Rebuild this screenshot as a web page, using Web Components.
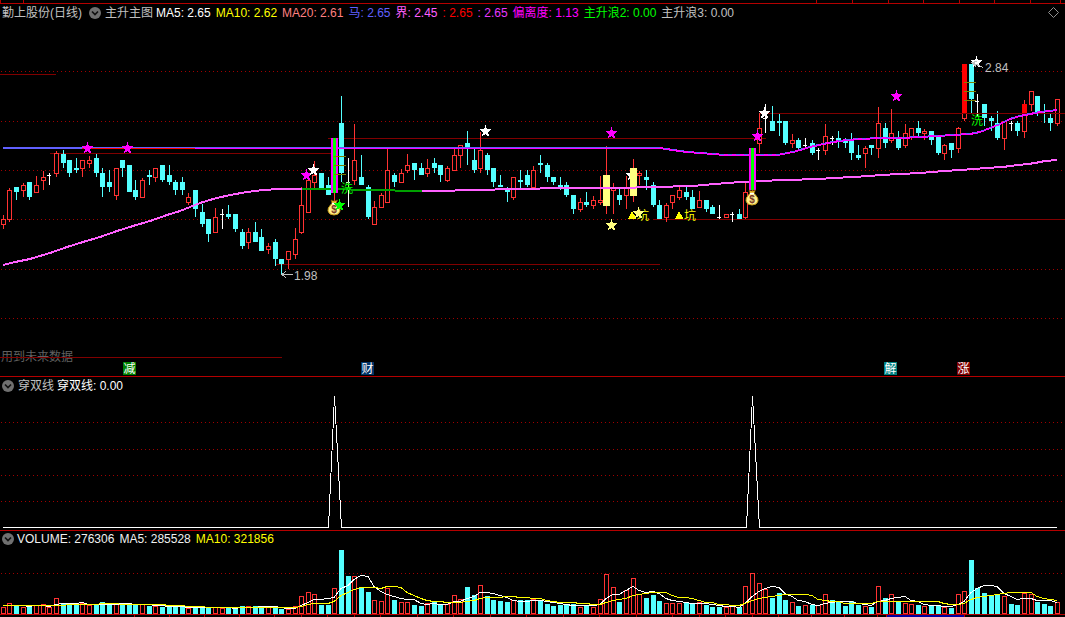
<!DOCTYPE html>
<html lang="zh-CN">
<head>
<meta charset="utf-8">
<title>勤上股份(日线)</title>
<style>
html{background:#000}
body{margin:0;background:#000;color:#c0c0c0;font:12px/16px "Liberation Sans","Noto Sans CJK SC",sans-serif}
</style>
</head>
<body>
<stock-terminal></stock-terminal>

<template id="t-terminal">
<style>
:host{display:flex;flex-direction:column;overflow:hidden}
</style>
<time-ruler edge="top"></time-ruler>
<chart-panel>
  <indicator-bar slot="bar" label="主升主图">
    <span slot="title">勤上股份(日线)</span>
    <indicator-value>MA5: 2.65</indicator-value>
    <indicator-value tone="yellow">MA10: 2.62</indicator-value>
    <indicator-value tone="salmon">MA20: 2.61</indicator-value>
    <indicator-value tone="blue">马: 2.65</indicator-value>
    <indicator-value tone="pink">界: 2.45</indicator-value>
    <indicator-value tone="red">: 2.65</indicator-value>
    <indicator-value tone="violet">: 2.65</indicator-value>
    <indicator-value tone="magenta">偏离度: 1.13</indicator-value>
    <indicator-value tone="green">主升浪2: 0.00</indicator-value>
    <indicator-value tone="grey">主升浪3: 0.00</indicator-value>
    <diamond-button slot="end"></diamond-button>
  </indicator-bar>
  <price-chart></price-chart>
</chart-panel>
<chart-panel ruled>
  <indicator-bar slot="bar" label="穿双线">
    <indicator-value>穿双线: 0.00</indicator-value>
  </indicator-bar>
  <signal-chart></signal-chart>
</chart-panel>
<chart-panel ruled>
  <indicator-bar slot="bar" compact>
    <indicator-value tone="light">VOLUME: 276306</indicator-value>
    <indicator-value tone="light">MA5: 285528</indicator-value>
    <indicator-value tone="yellow">MA10: 321856</indicator-value>
  </indicator-bar>
  <volume-chart></volume-chart>
</chart-panel>
<time-ruler edge="bottom"></time-ruler>
</template>

<template id="t-panel">
<style>
:host{display:block}
:host([ruled]){border-top:1px solid #b40000}
</style>
<slot name="bar"></slot><slot></slot>
</template>

<template id="t-bar">
<style>
:host{display:flex;align-items:center;gap:5px;height:17px;padding:0 6px 0 2px;white-space:nowrap}
:host([compact]){height:16px}
button{all:unset;display:block;width:12px;height:12px;cursor:pointer}
svg{display:block;width:12px;height:12px}
.lead{display:flex;align-items:center;gap:4px;margin-right:-2px}
.lead slot::slotted(span){margin-right:3px}
.end{margin-left:auto}
</style>
<span class="lead"><slot name="title"></slot><button type="button" aria-label="折叠指标"><svg viewBox="0 0 12 12"><circle cx="6" cy="6" r="6" fill="#707070"/><path d="M3 4.5 6 7.5 9 4.5" fill="none" stroke="#111" stroke-width="1.7"/></svg></button><span class="name"></span></span>
<slot></slot>
<span class="end"><slot name="end"></slot></span>
</template>

<script>
const N = 160;
const px = i => Math.floor(3.35 + 6.63 * i);
const CYAN = '#54ffff', RED = '#ff3232', DIM = '#800000';

const mount = (el, html) => {
  const root = el.attachShadow({ mode: 'open' });
  root.innerHTML = html;
  return root;
};
const clone = (el, id) => {
  const root = el.attachShadow({ mode: 'open' });
  root.append(document.getElementById(id).content.cloneNode(true));
  return root;
};
const rect = (x, y, w, h, f) => `<rect x="${x}" y="${y}" width="${w}" height="${h}" fill="${f}"/>`;
const hline = (x1, x2, y, f = DIM) => rect(x1, y, x2 - x1, 1, f);
const hollow = (x, y, w, h, c) => `<rect x="${x + .5}" y="${y + .5}" width="${w - 1}" height="${h - 1}" fill="#000" stroke="${c}"/>`;
const poly = (pts, c, w = 1, dash = '') => `<polyline points="${pts}" fill="none" stroke="${c}" stroke-width="${w}"${dash && ` stroke-dasharray="${dash}"`}/>`;
const dots = ys => ys.map(y => `<path d="M1 ${y + .5}H1065" stroke="#a00000" stroke-dasharray="1 3"/>`).join('');
const chart = (y, h, body) => `<style>:host{display:block}svg{display:block;width:100%;height:auto}text{font:12px "Liberation Sans","Noto Sans CJK SC",sans-serif}</style>
<svg viewBox="0 ${y} 1065 ${h}" shape-rendering="crispEdges" role="img">${body}</svg>`;

/* kind, high, body top, body bottom, low ; w = doji with the bar at body top */
const CANDLES = `r215,219,225,229 r188,190,220,222 c187,187,192,200 r183,185,191,197 c182,182,197,200 r176,185,193,193 r171,177,181,190 w173,175,175,185
r151,153,174,177 c150,154,163,168 c160,160,173,177 c158,168,170,173 r160,160,169,177 r156,160,164,168 c154,158,173,177 c168,173,187,197
c170,182,187,192 r168,168,196,200 c160,160,168,177 c165,165,192,192 c180,190,197,200 r178,180,198,198 c170,175,177,185 r168,168,178,182
c165,165,180,182 c165,175,182,185 c180,182,190,195 c177,182,190,195 r193,197,203,205 c190,190,209,217 c204,212,224,227 c219,219,234,242
r208,217,233,233 w209,214,214,229 c205,214,217,219 c214,214,229,232 c229,232,246,249 r228,232,243,249 c222,232,242,242 c229,237,251,251
r243,246,250,254 c239,242,259,266 c259,259,264,275 r251,251,260,269 r228,239,255,259 r187,205,233,234 r180,180,213,213 r161,175,183,188
c173,173,188,188 c177,185,195,195 g138,138,193,201 c96,123,173,182 w158,182,182,207 r124,160,181,185 c155,177,185,185 c185,187,217,219
r201,207,225,225 r193,195,208,208 r149,170,203,203 c173,175,182,187 r169,173,183,183 r154,165,171,173 c163,163,170,180 c163,168,175,175
r159,168,174,177 c158,163,168,173 c165,165,175,182 r166,168,181,182 r148,155,171,171 r145,145,156,168 c131,143,148,165 c149,160,170,173
r132,150,169,173 c153,155,170,175 c168,168,182,187 c175,185,187,187 c187,190,192,202 r177,177,198,200 c170,180,182,188 c170,175,185,187
r166,170,188,188 c155,163,165,173 c163,165,177,182 c177,177,182,185 c177,185,187,190 c182,185,195,197 c195,195,209,214 r198,202,210,212
c192,202,205,207 r196,200,206,209 r176,200,203,205 y146,175,206,214 r183,188,191,214 c189,195,200,205 r176,188,196,209 y159,168,196,202
r171,173,176,185 c170,177,180,190 c182,185,205,207 c200,205,219,219 r203,205,218,222 r195,195,203,209 r187,190,198,200 c187,192,197,200
c190,197,209,209 r191,200,208,208 c200,200,209,212 c205,207,214,214 w205,217,217,219 r214,214,218,218 w212,214,214,222 c209,214,219,219
r183,192,218,219 g148,148,190,192 r113,128,144,153 w104,118,118,133 c106,121,131,131 c114,121,123,136 c121,121,143,145 r134,140,144,148
c138,140,148,150 w138,145,145,147 c140,143,153,155 w148,150,150,160 r124,136,151,155 w136,138,138,145 c131,138,140,148 c138,140,143,148
c133,140,153,160 c145,155,158,160 r146,148,154,168 c145,145,148,155 r107,123,149,158 c123,128,143,148 r109,133,141,143 c131,137,148,150
r124,133,146,148 r128,128,137,140 c121,128,133,137 r129,131,134,140 c131,131,140,145 c137,137,153,155 r144,145,154,160 c143,143,150,158
r127,128,149,153 r64,64,119,121 c64,64,99,113 w94,101,101,116 c104,104,118,126 c116,118,121,131 c111,123,138,140 r121,121,139,150
w121,123,123,131 c121,123,131,136 r100,104,132,138 r91,91,105,111 c96,96,112,116 c104,113,114,123 c114,118,123,131 r99,99,124,126`
  .split(/\s+/).map(s => [s[0], ...s.slice(1).split(',').map(Number)]);

/* bar kind and the y of its top edge */
const VOLUMES = `r607 r603 c605 r607 c606 r605 r604 r607 r598 c603 c604 c604 r603 r605 c604 c602 c604 r604 c603 c603
c604 r604 c606 r606 c607 c606 c606 c607 r608 c607 c607 c607 r607 r608 c608 c608 c606 r606 c606 c606
r607 c607 c609 r609 r606 r596 r592 r594 c605 c605 r588 c550 c576 r576 c587 c592 r600 r601 r588 c600
r602 r602 c605 c606 r603 c601 c604 r604 r595 r599 c587 c595 r585 c596 c600 c601 c602 r600 c600 c600
r599 c600 c604 c606 c605 c604 c604 r607 c605 r607 r599 r574 r587 c602 r590 r578 r594 c598 c595 c601
r603 r603 r603 c602 c603 r602 c605 c607 c607 r607 r606 c607 r586 r573 r583 r589 c598 c593 c600 r602
c606 r605 c605 r605 r594 c600 c602 c606 c601 c605 r606 c607 r586 c598 r594 c601 r603 r604 c605 r606
c605 c605 r607 c608 r594 r591 c560 c588 c593 c595 c594 r596 c604 c605 r593 r594 c602 c604 c606 r602`
  .split(/\s+/).map(s => [s[0], +s.slice(1)]);

const candle = ([k, hi, a, b, lo], i) => {
  const x = px(i);
  if (k === 'w') return rect(x, hi, 1, lo - hi, '#fff') + rect(x - 2, a, 4, 1, '#fff');
  if (k === 'g') return rect(x, hi, 1, lo - hi, RED) + rect(x - 3, a, 7, b - a, '#ff00ff') + rect(x - 1, a, 3, b - a, '#00ff00');
  const wick = c => rect(x, hi, 1, lo - hi, c);
  if (k === 'y') return wick(RED) + rect(x - 3, a, 7, b - a, '#ffff80');
  if (k === 'c') return wick(CYAN) + rect(x - 2, a, 5, Math.max(1, b - a), CYAN);
  return wick(RED) + hollow(x - 2, a, 5, b - a, RED);
};

const starPath = (() => {
  const p = [];
  for (let i = 0; i < 10; i++) {
    const r = i % 2 ? 2.7 : 6.4, t = (i * 36 - 90) * Math.PI / 180;
    p.push((r * Math.cos(t)).toFixed(2) + ',' + (r * Math.sin(t)).toFixed(2));
  }
  return p.join(' ');
})();
const star = (x, y, c) => `<polygon points="${starPath}" transform="translate(${x + .5} ${y + .5})" fill="${c}"/>`;
const bag = (x, y) => `<g transform="translate(${x} ${y})" shape-rendering="auto"><path d="M-3-8Q0-6 3.500-8L2-4H-2Z" fill="#e8b818" stroke="#7a4a10" stroke-width=".6"/><path d="M-2-4.500H2L3.500-3Q6.500 0 6 3Q5 7 0 7T-6 3Q-6.500 0-3.500-3Z" fill="#fff08a" stroke="#c89c18"/><path d="M-2-4.500H2" stroke="#fff" stroke-width="1.500"/><text x="0" y="5" text-anchor="middle" style="font-size:10px;font-weight:700" fill="#7a3a28">$</text></g>`;
const label = (x, y, t, c) => `<text x="${x}" y="${y}" fill="${c}">${t}</text>`;
const tag = (x, t, c) => rect(x, 362, 13, 13, c) + label(x + .5, 373, t, '#fff');

const UPPER = [[660,147],[666,148],[673,149],[680,150],[687,151],[700,152],[713,153],[725,154],[778,154],[787,152],[793,151],[800,149],[810,146],[823,143],[833,141],[847,139],[860,138],[880,137],[900,137],[920,136],[937,135],[953,134],[970,133],[980,131],[990,127],[1000,123],[1010,118],[1020,115],[1030,113],[1040,111],[1057,109]];
const shift = (pts, dy) => pts.map(([x, y]) => x + ',' + (y + dy)).join(' ');

const priceChart = () => {
  let s = dots([71, 121, 170, 219, 269, 318]);
  s += hline(0, 56, 74) + hline(50, 331, 153) + hline(328, 766, 138) + hline(275, 660, 264) + hline(653, 1065, 219) + hline(760, 1065, 113);
  s += label(1, 361, '用到未来数据', '#606060') + hline(0, 282, 357);
  s += star(631, 175, '#fff');
  s += CANDLES.map(candle).join('');
  s += rect(962, 64, 5, 50, '#ff0000') + rect(px(154) - 2, 104, 5, 11, '#ff0000');
  s += hline(960, 1065, 113);
  /* upper band */
  s += rect(3, 147, 79, 2, '#6060ff') + rect(82, 147, 578, 1, '#6060ff') + rect(82, 148, 113, 1, '#ff0000') + rect(195, 148, 465, 1, '#ff00ff');
  s += poly(shift(UPPER, 1), '#6060ff', 2) + poly(shift(UPPER, 1.5), '#ff00ff') + poly(shift(UPPER, 1), '#ff00ff', 2, '4 4');
  /* long average */
  s += poly('3,265 15,262 30,259 50,253 67,247 83,242 100,237 117,231 133,226 150,221 167,215 180,211 190,207 200,203 213,199 230,195 247,192 263,190 280,189 302,189', '#ff60ff', 2);
  s += poly('302,189 350,189 352,190 394,190 396,191 422,191', '#00a000', 2);
  s += poly('422,191 454,191 456,190 494,190 496,189 539,189 541,188 635,188 637,187 672,187 674,186 692,186 715,184 740,182 760,181 785,180 820,179 833,178 853,177 870,176 880,175 900,174 920,173 932,172 945,171 960,170 975,169 985,168 1003,167 1010,166 1018,165 1028,164 1035,163 1045,161 1057,160', '#ff60ff', 2);
  /* entry bars stay over the averages */
  s += candle(CANDLES[50], 50) + candle(CANDLES[113], 113);
  for (const y of [156, 165, 174]) s += hline(334, 346, y, '#808000');
  for (const y of [82, 91, 100]) s += hline(964, 976, y, '#808000');
  s += label(341, 193, '洗', '#00ff00') + label(971, 125, '洗', '#00ff00');
  s += bag(334, 208) + bag(752, 198);
  for (const [x, y] of [[87,148],[127,148],[306,175],[611,133],[757,136],[896,96]]) s += star(x, y, '#ff00ff');
  for (const [x, y] of [[313,170],[485,131],[764,113],[976,62]]) s += star(x, y, '#fff');
  s += star(339, 205, '#00ff00') + star(611, 225, '#ffff80');
  for (const x of [632, 679]) s += `<path d="M${x} 211 ${x + 4.5} 219H${x - 4}Z" fill="#ffff00"/>`;
  s += label(637, 220, '坑', '#ffff00') + label(684, 220, '坑', '#ffff00') + star(638, 213, '#ffff80');
  s += `<path d="M293 274.500H282M286 271.500 282 274.500 286 277.500M983 67.500 972 62.500M976 66.500 972 62.500 977 61.500" fill="none" stroke="#c0c0c0"/>`;
  s += label(294, 280, '1.98', '#c0c0c0') + label(985, 72, '2.84', '#c0c0c0');
  s += tag(123, '减', '#008000') + tag(361, '财', '#003468') + tag(884, '解', '#008080') + tag(957, '涨', '#800000');
  return chart(21, 355, s);
};

const average = n => VOLUMES.map((v, i) => {
  const w = VOLUMES.slice(Math.max(0, i - n + 1), i + 1);
  const y = i < n - 1 ? 605 : w.reduce((a, b) => a + b[1], 0) / w.length;
  return `${px(i)},${Math.round(y) + .5}`;
}).join(' ');

customElements.define('price-chart', class extends HTMLElement {
  constructor() { super(); mount(this, priceChart()); }
});
customElements.define('signal-chart', class extends HTMLElement {
  constructor() {
    super();
    mount(this, chart(394, 136, dots([422, 449, 475, 501]) +
      poly('3,527.5 328.500,527.5 334.500,396 341.500,527.5 746.500,527.5 752.500,396 759.500,527.5 1057,527.5', '#fff')));
  }
});
customElements.define('volume-chart', class extends HTMLElement {
  constructor() {
    super();
    const bars = VOLUMES.map(([k, y], i) => k === 'c' ? rect(px(i) - 2, y, 5, 614 - y, CYAN) : hollow(px(i) - 2, y, 5, 614 - y, RED)).join('');
    mount(this, chart(547, 67, dots([573]) + bars + poly(average(5), '#fff') + poly(average(10), '#ffff00')));
  }
});
customElements.define('time-ruler', class extends HTMLElement {
  constructor() {
    super();
    const top = this.getAttribute('edge') === 'top';
    const marks = top ? [23, 816, 852, 888, 923, 959, 994, 1030, 1060] :
      [134, 169, 204, 239, 274, 301, 327, 354, 380, 417, 453, 490, 526, 563, 599, 636, 672, 699, 725, 752, 778, 811, 844, 877, 886, 964];
    const s = marks.map(x => rect(x, top ? 0 : 1, 1, top ? 3 : 2, '#b40000')).join('');
    mount(this, chart(0, top ? 4 : 3, s + (top ? rect(0, 0, 1, 3, '#b40000') + hline(0, 1065, 3, '#b40000') :
      hline(0, 1065, 0, '#b40000') + rect(887, 1, 77, 2, '#0000a0'))));
  }
});
customElements.define('diamond-button', class extends HTMLElement {
  constructor() {
    super();
    mount(this, `<style>:host{display:block}button{all:unset;display:block;cursor:pointer}svg{display:block}</style>
<button type="button" aria-label="标记"><svg width="11" height="11" viewBox="0 0 11 11"><path d="M5.500 .5 10.500 5.500 5.500 10.500 .5 5.500Z" fill="none" stroke="#909090"/></svg></button>`);
  }
});
customElements.define('indicator-value', class extends HTMLElement {
  constructor() {
    super();
    mount(this, `<style>:host{display:block;color:#fff}
:host([tone=light]){color:#f0f0f0}:host([tone=yellow]){color:#ffff00}:host([tone=salmon]){color:#ff8080}
:host([tone=blue]){color:#6060ff}:host([tone=pink]){color:#ff60ff}:host([tone=red]){color:#ff0000}
:host([tone=violet]){color:#e838ff}:host([tone=magenta]){color:#ff00ff}:host([tone=green]){color:#00ff00}
:host([tone=grey]){color:#c0c0c0}</style><slot></slot>`);
  }
});
customElements.define('indicator-bar', class extends HTMLElement {
  constructor() {
    super();
    const root = clone(this, 't-bar'), name = root.querySelector('.name');
    if (this.getAttribute('label')) name.textContent = this.getAttribute('label'); else name.remove();
  }
});
customElements.define('chart-panel', class extends HTMLElement {
  constructor() { super(); clone(this, 't-panel'); }
});
customElements.define('stock-terminal', class extends HTMLElement {
  constructor() { super(); clone(this, 't-terminal'); }
});
</script>
</body>
</html>
